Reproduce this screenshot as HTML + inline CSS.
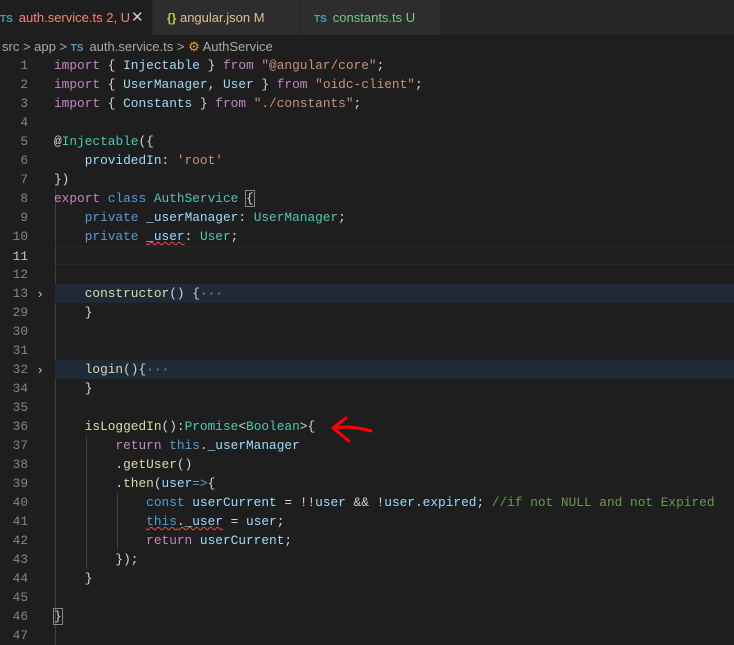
<!DOCTYPE html><html><head><style>
body{margin:0;width:734px;height:637px;background:#1e1e1e;overflow:hidden;font-family:"Liberation Sans",sans-serif;position:relative}
.tabs{position:absolute;left:0;top:0;width:734px;height:35px;background:#252526}
.tab{position:absolute;top:0;height:35px;line-height:35px;font-size:13px;background:#2d2d2d}
.ic{font-size:10px;font-weight:bold;color:#519aba;margin-right:6px}
.bc{position:absolute;top:37px;left:2px;font-size:13px;color:#a9a9a9;line-height:20px}
.code{position:absolute;left:0;top:56px;width:734px;font-family:"Liberation Mono",monospace;font-size:12.8px}
.l{height:19px;line-height:19px;position:relative;white-space:pre;color:#d4d4d4}
.n{position:absolute;left:0;width:28px;text-align:right;color:#858585}
.t{position:absolute;left:54px}
.k{color:#569cd6}.c{color:#c586c0}.s{color:#ce9178}.y{color:#4ec9b0}.v{color:#9cdcfe}.f{color:#dcdcaa}.g{color:#6a9955}
.fold{background:#1f2a36}
.sq{text-decoration:underline wavy #f14c4c;text-decoration-thickness:1px}
.ar{position:absolute;left:38px;color:#c5c5c5;font-family:"Liberation Sans";font-size:13px}
.gd{position:absolute;width:1px;background:#404040}
</style></head><body>
<div class="tabs">
<div class="tab" style="left:0;width:152px;background:#1e1e1e;padding-left:0"><span class="ic" style="margin-left:0">TS</span><span style="color:#f48771">auth.service.ts 2, U</span><span style="position:absolute;left:131px;color:#ccc;font-size:15px">✕</span></div>
<div class="tab" style="left:153px;width:146px"><span style="color:#cbcb41;margin-left:14px;font-size:12px;font-weight:bold">{}</span> <span style="color:#e2c08d">angular.json M</span></div>
<div class="tab" style="left:300px;width:140px"><span class="ic" style="margin-left:14px">TS</span><span style="color:#73c991">constants.ts U</span></div>
</div>
<div class="bc">src &gt; app &gt; <span class="ic">TS</span>auth.service.ts &gt; <span style="color:#ee9d28">⚙</span> AuthService</div>
<div class="code">
<div class="gd" style="left:55px;top:133px;height:456px"></div>
<div class="gd" style="left:86px;top:380px;height:133px"></div>
<div class="gd" style="left:117px;top:437px;height:57px"></div>
<div class="l"><span class="n">1</span><span class="t"><span class="c">import</span> { <span class="v">Injectable</span> } <span class="c">from</span> <span class="s">"@angular/core"</span>;</span></div>
<div class="l"><span class="n">2</span><span class="t"><span class="c">import</span> { <span class="v">UserManager</span>, <span class="v">User</span> } <span class="c">from</span> <span class="s">"oidc-client"</span>;</span></div>
<div class="l"><span class="n">3</span><span class="t"><span class="c">import</span> { <span class="v">Constants</span> } <span class="c">from</span> <span class="s">"./constants"</span>;</span></div>
<div class="l"><span class="n">4</span></div>
<div class="l"><span class="n">5</span><span class="t">@<span class="y">Injectable</span>({</span></div>
<div class="l"><span class="n">6</span><span class="t">    <span class="v">providedIn</span>: <span class="s">'root'</span></span></div>
<div class="l"><span class="n">7</span><span class="t">})</span></div>
<div class="l"><span class="n">8</span><span class="t"><span class="c">export</span> <span class="k">class</span> <span class="y">AuthService</span> <span style="outline:1px solid #888">{</span></span></div>
<div class="l"><span class="n">9</span><span class="t">    <span class="k">private</span> <span class="v">_userManager</span>: <span class="y">UserManager</span>;</span></div>
<div class="l"><span class="n">10</span><span class="t">    <span class="k">private</span> <span class="v sq">_user</span>: <span class="y">User</span>;</span></div>
<div class="l" style="border-top:1px solid #282828;border-bottom:1px solid #282828;height:17px;margin-left:55px"><span class="n" style="color:#c6c6c6;left:-55px">11</span></div>
<div class="l"><span class="n">12</span></div>
<div class="l"><div class="fold" style="position:absolute;left:55px;right:0;top:0;bottom:0"></div><span class="n">13</span><span class="ar">›</span><span class="t">    <span class="f">constructor</span>() {<span style="color:#888">···</span></span></div>
<div class="l"><span class="n">29</span><span class="t">    }</span></div>
<div class="l"><span class="n">30</span></div>
<div class="l"><span class="n">31</span></div>
<div class="l"><div class="fold" style="position:absolute;left:55px;right:0;top:0;bottom:0"></div><span class="n">32</span><span class="ar">›</span><span class="t">    <span class="f">login</span>(){<span style="color:#888">···</span></span></div>
<div class="l"><span class="n">34</span><span class="t">    }</span></div>
<div class="l"><span class="n">35</span></div>
<div class="l"><span class="n">36</span><span class="t">    <span class="f">isLoggedIn</span>():<span class="y">Promise</span>&lt;<span class="y">Boolean</span>&gt;{</span></div>
<div class="l"><span class="n">37</span><span class="t">        <span class="c">return</span> <span class="k">this</span>.<span class="v">_userManager</span></span></div>
<div class="l"><span class="n">38</span><span class="t">        .<span class="f">getUser</span>()</span></div>
<div class="l"><span class="n">39</span><span class="t">        .<span class="f">then</span>(<span class="v">user</span><span class="k">=&gt;</span>{</span></div>
<div class="l"><span class="n">40</span><span class="t">            <span class="k">const</span> <span class="v">userCurrent</span> = !!<span class="v">user</span> &amp;&amp; !<span class="v">user</span>.<span class="v">expired</span>; <span class="g">//if not NULL and not Expired</span></span></div>
<div class="l"><span class="n">41</span><span class="t">            <span class="sq"><span class="k">this</span>.<span class="v">_user</span></span> = <span class="v">user</span>;</span></div>
<div class="l"><span class="n">42</span><span class="t">            <span class="c">return</span> <span class="v">userCurrent</span>;</span></div>
<div class="l"><span class="n">43</span><span class="t">        });</span></div>
<div class="l"><span class="n">44</span><span class="t">    }</span></div>
<div class="l"><span class="n">45</span></div>
<div class="l"><span class="n">46</span><span class="t"><span style="outline:1px solid #888">}</span></span></div>
<div class="l"><span class="n">47</span></div>
</div>
<svg style="position:absolute;left:0;top:0" width="734" height="637"><path d="M334 428 Q350 425 371 431 M346 418 L333 428 L349 441" stroke="#f00" stroke-width="3" fill="none" stroke-linecap="round" stroke-linejoin="round"/></svg>
</body></html>
